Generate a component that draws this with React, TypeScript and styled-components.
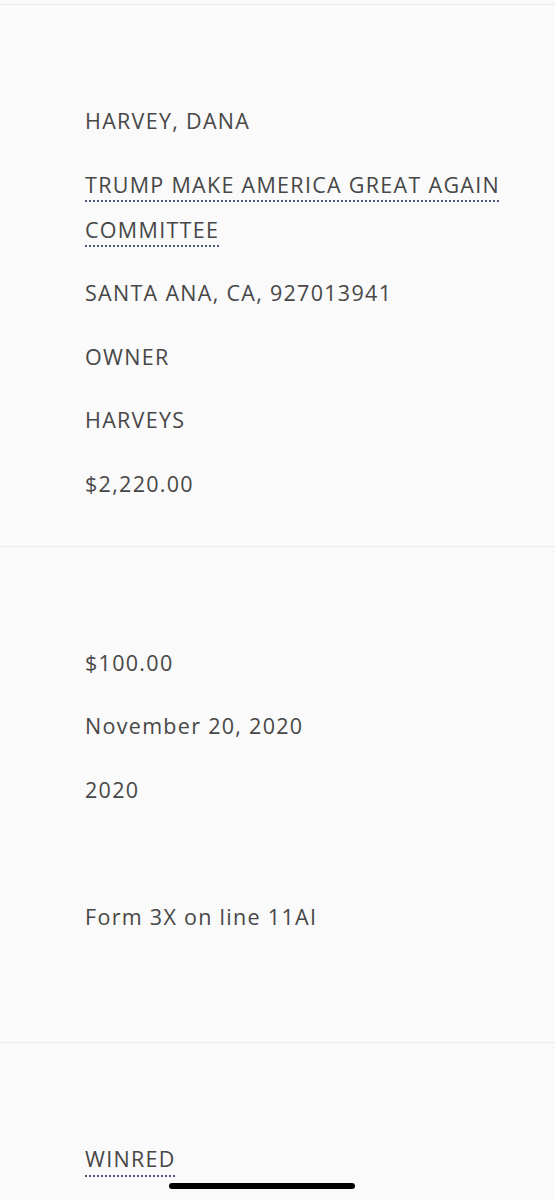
import React from 'react';
import styled, { createGlobalStyle } from 'styled-components';

const GlobalStyle = createGlobalStyle`
  html, body {
    margin: 0;
    padding: 0;
    background: #fafafa;
    overflow: hidden;
  }
  body {
    font-family: 'Open Sans', 'Liberation Sans', sans-serif;
  }
`;

const Page = styled.div`
  padding-top: 4px;
  min-height: 1200px;
  background: #fafafa;
`;

const Section = styled.section`
  border-top: 1px solid #ececec;
  padding: 93px 30px 21.5px 85px;
`;

const Row = styled.div`
  margin: 0 0 18.5px;
  font-size: 21.5px;
  line-height: 45px;
  color: #474747;
  letter-spacing: 1.3px;
`;

const Dotted = styled.span`
  text-decoration: underline dotted #4a5878;
  text-decoration-thickness: 2px;
  text-underline-offset: 8px;
`;

const HomeIndicator = styled.div`
  position: fixed;
  left: 169px;
  top: 1183px;
  width: 186px;
  height: 6px;
  border-radius: 3px;
  background: #000;
`;

type Field = { text: string; link?: boolean };

const sections: Field[][] = [
  [
    { text: 'HARVEY, DANA' },
    { text: 'TRUMP MAKE AMERICA GREAT AGAIN COMMITTEE', link: true },
    { text: 'SANTA ANA, CA, 927013941' },
    { text: 'OWNER' },
    { text: 'HARVEYS' },
    { text: '$2,220.00' },
  ],
  [
    { text: '$100.00' },
    { text: 'November 20, 2020' },
    { text: '2020' },
    { text: '' },
    { text: 'Form 3X on line 11AI' },
    { text: '' },
  ],
  [{ text: 'WINRED', link: true }],
];

export default function App() {
  return (
    <>
      <GlobalStyle />
      <Page>
        {sections.map((fields, i) => (
          <Section key={i}>
            {fields.map((f, j) => (
              <Row key={j}>
                {f.text === '' ? '\u00a0' : f.link ? <Dotted>{f.text}</Dotted> : f.text}
              </Row>
            ))}
          </Section>
        ))}
      </Page>
      <HomeIndicator />
    </>
  );
}
